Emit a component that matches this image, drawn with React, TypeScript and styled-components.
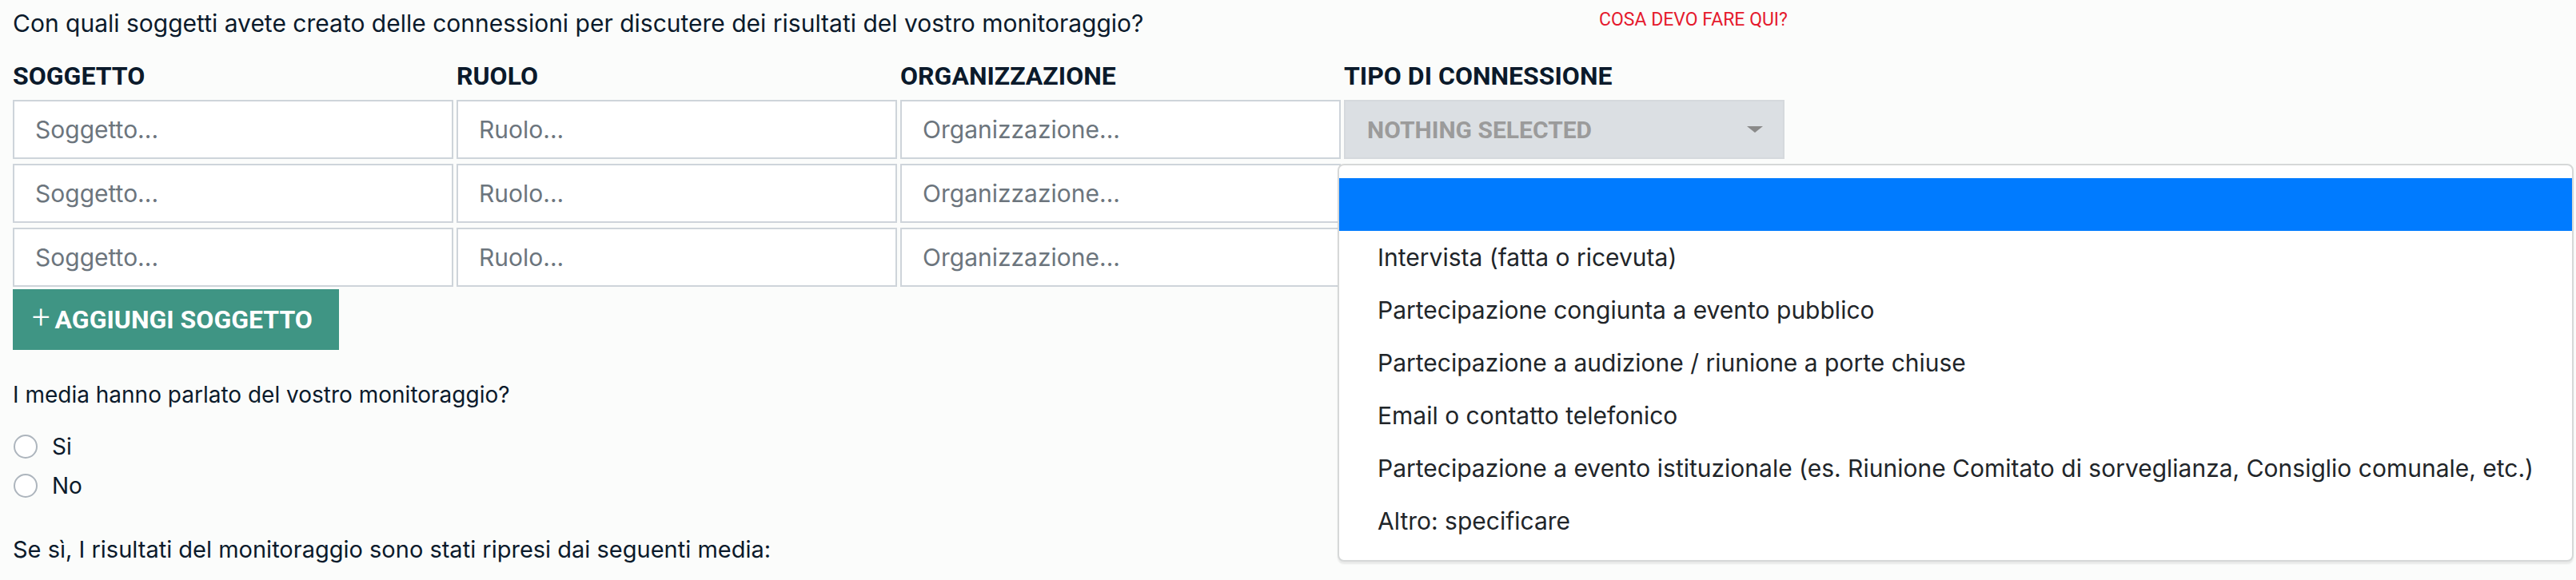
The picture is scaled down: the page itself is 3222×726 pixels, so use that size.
import React from 'react';
import styled, { createGlobalStyle } from 'styled-components';

const GlobalStyle = createGlobalStyle`
  html, body {
    margin: 0;
    padding: 0;
    background: #fbfcfb;
    font-family: Inter, "Liberation Sans", Arial, sans-serif;
    color: #0b1a2b;
  }
  * {
    box-sizing: border-box;
  }
`;

const heading = `Roboto, "Liberation Sans", Arial, sans-serif`;

const Page = styled.div`
  padding: 0 16px;
`;

const TopRow = styled.div`
  display: flex;
  justify-content: space-between;
  align-items: flex-start;
  width: 2220px;
  height: 75px;
  padding-top: 9px;
`;

const Question = styled.p`
  margin: 0;
  font-size: 30px;
  line-height: 40px;
  color: #0b1a2b;
`;

const HelpLink = styled.a`
  font-family: ${heading};
  font-size: 23px;
  line-height: 30px;
  margin-top: 1px;
  color: #e5192d;
  text-transform: uppercase;
  cursor: pointer;
`;

const Grid = styled.div`
  display: grid;
  grid-template-columns: repeat(4, 551px);
  column-gap: 4px;
  row-gap: 6px;
`;

const HeaderCell = styled.div`
  height: 44px;
  font-family: ${heading};
  font-size: 32px;
  line-height: 40px;
  font-weight: 700;
  color: #0b1a2b;
  text-transform: uppercase;
`;

const TextInput = styled.input`
  height: 74px;
  width: 100%;
  border: 2px solid #ced4da;
  background: #fff;
  padding: 0 26px;
  font-family: inherit;
  font-size: 30px;
  color: #495057;
  outline: none;
  &::placeholder {
    color: #6c757d;
  }
`;

const SelectCell = styled.div`
  position: relative;
`;

const SelectButton = styled.div`
  height: 74px;
  display: flex;
  align-items: center;
  justify-content: space-between;
  padding: 0 25px 0 27px;
  background: #dbdfe3;
  border: 2px solid #d5d9dd;
  font-family: ${heading};
  font-size: 30px;
  font-weight: 700;
  color: #9b9b9b;
  text-transform: uppercase;
`;

const Caret = styled.span`
  width: 0;
  height: 0;
  border-left: 10px solid transparent;
  border-right: 10px solid transparent;
  border-top: 8px solid #8a8a8a;
`;

const Dropdown = styled.ul`
  position: absolute;
  top: calc(100% + 6px);
  left: -8px;
  z-index: 10;
  width: max-content;
  margin: 0;
  padding: 16px 0;
  list-style: none;
  background: #fff;
  border: 2px solid #d6d8d8;
  border-radius: 8px;
  box-shadow: 0 3px 2px rgba(0, 0, 0, 0.08);
`;

const DropdownItem = styled.li<{ $active?: boolean }>`
  height: 66px;
  padding: 8px 48px;
  font-size: 30px;
  line-height: 50px;
  white-space: nowrap;
  color: ${(p) => (p.$active ? '#fff' : '#212529')};
  background: ${(p) => (p.$active ? '#007bff' : 'transparent')};
`;

const AddButton = styled.button`
  display: flex;
  align-items: center;
  gap: 6px;
  margin-top: 3px;
  width: 408px;
  height: 76px;
  padding: 0 24px;
  border: none;
  background: #3f9584;
  color: #fff;
  font-family: ${heading};
  font-size: 32px;
  font-weight: 700;
  text-transform: uppercase;
  cursor: pointer;
`;

const Plus = styled.span`
  font-weight: 300;
  font-size: 40px;
  line-height: 1;
  margin-top: -4px;
`;

const FieldLabel = styled.p<{ $gap: number; $size: number }>`
  margin: ${(p) => p.$gap}px 0 0;
  font-size: ${(p) => p.$size}px;
  line-height: 40px;
  color: #0b1a2b;
`;

const RadioGroup = styled.div`
  margin-top: 20px;
`;

const RadioRow = styled.label`
  display: flex;
  align-items: center;
  gap: 18px;
  height: 49px;
  font-size: 28px;
  color: #0b1a2b;
`;

const RadioCircle = styled.span`
  width: 30px;
  height: 30px;
  margin-left: 1px;
  border: 2px solid #adb5bd;
  border-radius: 50%;
  background: #fff;
`;

const options = [
  '',
  'Intervista (fatta o ricevuta)',
  'Partecipazione congiunta a evento pubblico',
  'Partecipazione a audizione / riunione a porte chiuse',
  'Email o contatto telefonico',
  'Partecipazione a evento istituzionale (es. Riunione Comitato di sorveglianza, Consiglio comunale, etc.)',
  'Altro: specificare',
];

const rows = [0, 1, 2];

export default function App() {
  return (
    <Page>
      <GlobalStyle />
      <TopRow>
        <Question>
          Con quali soggetti avete creato delle connessioni per discutere dei risultati del vostro monitoraggio?
        </Question>
        <HelpLink>Cosa devo fare qui?</HelpLink>
      </TopRow>

      <Grid>
        <HeaderCell>Soggetto</HeaderCell>
        <HeaderCell>Ruolo</HeaderCell>
        <HeaderCell>Organizzazione</HeaderCell>
        <HeaderCell>Tipo di connessione</HeaderCell>
        {rows.map((r) => (
          <React.Fragment key={r}>
            <TextInput placeholder="Soggetto..." />
            <TextInput placeholder="Ruolo..." />
            <TextInput placeholder="Organizzazione..." />
            {r === 0 ? (
              <SelectCell>
                <SelectButton>
                  Nothing selected
                  <Caret />
                </SelectButton>
                <Dropdown>
                  {options.map((o, i) => (
                    <DropdownItem key={i} $active={i === 0}>
                      {o}
                    </DropdownItem>
                  ))}
                </Dropdown>
              </SelectCell>
            ) : (
              <div />
            )}
          </React.Fragment>
        ))}
      </Grid>

      <AddButton>
        <Plus>+</Plus>
        Aggiungi soggetto
      </AddButton>

      <FieldLabel $gap={36} $size={28}>
        I media hanno parlato del vostro monitoraggio?
      </FieldLabel>
      <RadioGroup>
        <RadioRow>
          <RadioCircle />
          Si
        </RadioRow>
        <RadioRow>
          <RadioCircle />
          No
        </RadioRow>
      </RadioGroup>

      <FieldLabel $gap={36} $size={29}>
        Se sì, I risultati del monitoraggio sono stati ripresi dai seguenti media:
      </FieldLabel>
    </Page>
  );
}
